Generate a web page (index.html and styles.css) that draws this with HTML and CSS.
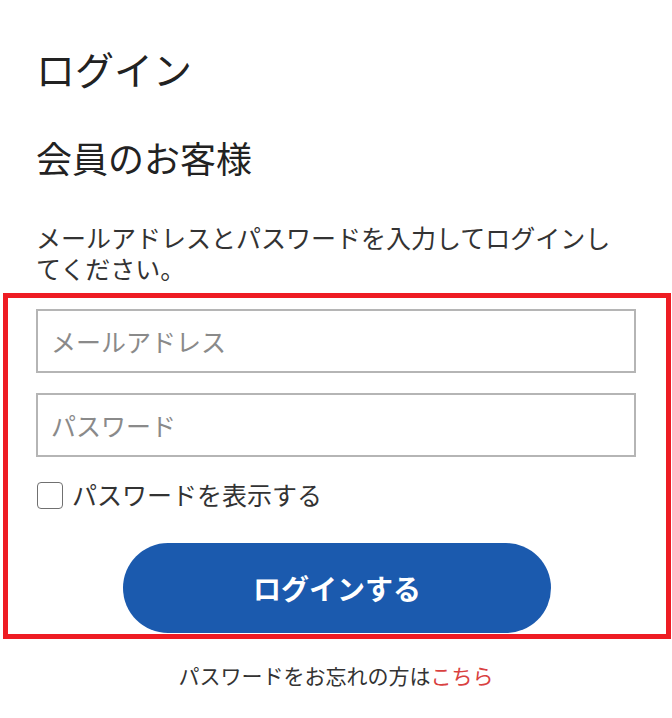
FILE: index.html
```html
<!DOCTYPE html>
<html lang="ja">
<head>
<meta charset="utf-8">
<title>ログイン</title>
<link rel="stylesheet" href="styles.css">
</head>
<body>
<main class="page">
  <div class="intro">
    <h1 class="title">ログイン</h1>
    <h2 class="subtitle">会員のお客様</h2>
    <p class="lead">メールアドレスとパスワードを入力してログインしてください。</p>
  </div>
  <form class="login-form">
    <input class="field" type="email" placeholder="メールアドレス">
    <input class="field field-second" type="password" placeholder="パスワード">
    <label class="show-row">
      <input class="check" type="checkbox">
      <span class="show-label">パスワードを表示する</span>
    </label>
    <div class="btn-wrap">
      <button class="btn" type="button">ログインする</button>
    </div>
  </form>
  <p class="forgot">パスワードをお忘れの方は<a class="forgot-link" href="#">こちら</a></p>
</main>
</body>
</html>
```
FILE: styles.css
```css
* { box-sizing: border-box; }
html, body { margin: 0; padding: 0; background: #fff; }
body {
  font-family: "Noto Sans CJK JP", "Noto Sans", sans-serif;
  color: #333;
  width: 672px;
}
.page { padding: 0; }
.intro { padding: 0 36px; }
.title {
  margin: 0;
  padding-top: 47px;
  font-size: 39px;
  line-height: 43px;
  font-weight: 400;
  color: #222;
}
.subtitle {
  margin: 46px 0 0;
  font-size: 36px;
  line-height: 43px;
  font-weight: 400;
  color: #222;
}
.lead {
  margin: 43px 4px 0 0;
  font-size: 25px;
  line-height: 31px;
  color: #333;
}
.login-form {
  margin: 9px 1px 0 3px;
  border: 5px solid #ee1c23;
  padding: 11px 30px 1px 28px;
  display: flex;
  flex-direction: column;
}
.field {
  display: block;
  width: 100%;
  height: 64px;
  margin: 0;
  border: 2px solid #b5b5b5;
  border-radius: 0;
  padding: 0 13px;
  font-family: inherit;
  font-size: 25px;
  color: #333;
  background: #fff;
  outline: none;
}
.field::placeholder { color: #8a8a8a; }
.field-second { margin-top: 20px; }
.show-row {
  margin-top: 22px;
  height: 30px;
  display: flex;
  align-items: center;
  gap: 9px;
  font-size: 25px;
  line-height: 30px;
  color: #333;
}
.check {
  appearance: none;
  -webkit-appearance: none;
  margin: 2px 0 0 1px;
  width: 26px;
  height: 27px;
  border: 1.5px solid #707070;
  border-radius: 4px;
  background: #fff;
}
.show-label { display: block; }
.btn-wrap {
  margin-top: 34px;
  display: flex;
  justify-content: center;
  padding-left: 2px;
}
.btn {
  width: 428px;
  height: 90px;
  border: 0;
  border-radius: 45px;
  background: #1b5aae;
  color: #fff;
  font-family: inherit;
  font-size: 28px;
  font-weight: 700;
  letter-spacing: 0;
}
.forgot {
  margin: 21px 0 0;
  text-align: center;
  font-size: 21px;
  line-height: 30px;
  color: #333;
}
.forgot-link { color: #d9413f; text-decoration: none; }
```
